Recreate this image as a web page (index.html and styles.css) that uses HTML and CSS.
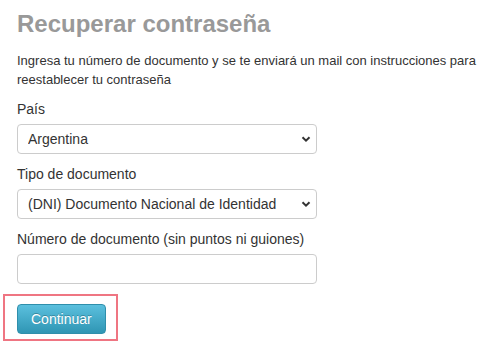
FILE: index.html
```html
<!DOCTYPE html>
<html lang="es">

<head>
    <meta charset="UTF-8">
    <meta name="viewport" content="width=device-width, initial-scale=1.0">
    <title>Recuperar contraseña</title>
    <link rel="stylesheet" href="styles.css">
</head>

<body>
    <div class="recover-box">
        <h2 class="recover-title">Recuperar contraseña</h2>
        <p class="recover-text">Ingresa tu número de documento y se te enviará un mail con instrucciones para reestablecer tu contraseña</p>

        <form class="recover-form">
            <div class="form-field">
                <label for="pais">País</label>
                <div class="select-wrap">
                    <select id="pais">
                        <option>Argentina</option>
                    </select>
                    <svg class="select-arrow" width="10" height="8" viewBox="0 0 10 8">
                        <path d="M1.5 2.2 L5 5.6 L8.5 2.2" fill="none" stroke="#333" stroke-width="2"/>
                    </svg>
                </div>
            </div>
            <div class="form-field">
                <label for="tipo">Tipo de documento</label>
                <div class="select-wrap">
                    <select id="tipo">
                        <option>(DNI) Documento Nacional de Identidad</option>
                    </select>
                    <svg class="select-arrow" width="10" height="8" viewBox="0 0 10 8">
                        <path d="M1.5 2.2 L5 5.6 L8.5 2.2" fill="none" stroke="#333" stroke-width="2"/>
                    </svg>
                </div>
            </div>
            <div class="form-field">
                <label for="numero">Número de documento (sin puntos ni guiones)</label>
                <input type="text" id="numero">
            </div>
            <div class="submit-area">
                <button type="button" class="btn-continue">Continuar</button>
            </div>
        </form>
    </div>
</body>

</html>
```

FILE: styles.css
```css
body {
    margin: 0;
    font-family: "Liberation Sans", Arial, sans-serif;
    color: #333;
    background: #fff;
}

.recover-box {
    padding: 9px 0 0 17px;
}

.recover-title {
    margin: 0;
    font-size: 24px;
    line-height: 30px;
    font-weight: bold;
    color: #999;
}

.recover-text {
    margin: 12px 0 0 0;
    font-size: 13px;
    line-height: 19px;
}

.recover-form {
    margin-top: 10px;
}

.form-field {
    margin-bottom: 10px;
}

.form-field label {
    display: block;
    font-size: 14px;
    line-height: 20px;
    margin-bottom: 5px;
}

.select-wrap {
    position: relative;
    width: 300px;
}

select,
input[type="text"] {
    box-sizing: border-box;
    width: 300px;
    height: 30px;
    border: 1px solid #ccc;
    border-radius: 4px;
    background: #fff;
    font-family: "Liberation Sans", Arial, sans-serif;
    font-size: 14px;
    color: #333;
    padding: 0 10px;
    -webkit-appearance: none;
    appearance: none;
}

.select-arrow {
    position: absolute;
    right: 6px;
    top: 11px;
    pointer-events: none;
}

/* highlighted submit area */
.submit-area {
    margin: 10px 0 0 -14px;
    width: 115px;
    padding: 8px 0 5px 12px;
    border: 2px solid #ef7582;
    box-sizing: border-box;
}

.btn-continue {
    display: block;
    height: 30px;
    padding: 0 13px;
    border: 1px solid #2f8fab;
    border-radius: 4px;
    background: linear-gradient(to bottom, #5bc0de, #2f96b4);
    color: #fff;
    font-family: "Liberation Sans", Arial, sans-serif;
    font-size: 14px;
    text-shadow: 0 -1px 0 rgba(0, 0, 0, 0.25);
    cursor: pointer;
}
```
